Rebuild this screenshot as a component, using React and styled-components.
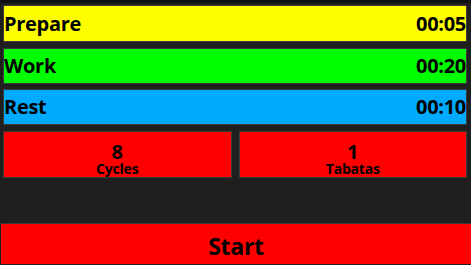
import React from 'react';
import styled, { createGlobalStyle } from 'styled-components';

const GlobalStyle = createGlobalStyle`
    html, body {
        margin: 0;
        padding: 0;
        background: #1f1f1f;
    }
    * {
        box-sizing: border-box;
    }
`;

const phases = [
    { name: 'Prepare', time: '00:05', color: '#ffff00', height: 37, gap: 0 },
    { name: 'Work', time: '00:20', color: '#00ff00', height: 36, gap: 6 },
    { name: 'Rest', time: '00:10', color: '#00aaff', height: 36, gap: 5 },
];

const counters = [
    { value: 8, label: 'Cycles' },
    { value: 1, label: 'Tabatas' },
];

const App = () => {
    return (
        <>
            <GlobalStyle />
            <Screen>
                <TopStrip />
                {phases.map((p) => (
                    <PhaseBar key={p.name} $color={p.color} $height={p.height} $gap={p.gap}>
                        <span>{p.name}</span>
                        <span>{p.time}</span>
                    </PhaseBar>
                ))}
                <Counters>
                    {counters.map((c) => (
                        <Counter key={c.label}>
                            <div className="value">{c.value}</div>
                            <div className="label">{c.label}</div>
                        </Counter>
                    ))}
                </Counters>
                <Spacer />
                <StartButton>Start</StartButton>
            </Screen>
        </>
    );
};

const Screen = styled.div`
    display: flex;
    flex-direction: column;
    width: 471px;
    height: 265px;
    background: #1f1f1f;
    font-family: "Open Sans", "Noto Sans", sans-serif;
    font-weight: 700;
    color: #000;
    overflow: hidden;
`;

const TopStrip = styled.div`
    height: 5px;
    flex-shrink: 0;
    background: linear-gradient(#111 0, #111 3px, #1f1f1f 3px);
`;

const PhaseBar = styled.div`
    display: flex;
    justify-content: space-between;
    align-items: center;
    flex-shrink: 0;
    height: ${(p) => p.$height}px;
    margin: ${(p) => p.$gap}px 4px 0 3px;
    padding: 0;
    background: ${(p) => p.$color};
    border: 1px solid #3a3a3a;
    font-size: 20px;
    letter-spacing: -0.3px;
    line-height: 1;
`;

const Counters = styled.div`
    display: grid;
    grid-template-columns: 1fr 1fr;
    gap: 7px;
    height: 47px;
    flex-shrink: 0;
    margin: 6px 4px 0 3px;
`;

const Counter = styled.div`
    display: flex;
    flex-direction: column;
    align-items: center;
    justify-content: flex-start;
    background: #ff0000;
    border: 1px solid #3a3a3a;
    padding-top: 11px;
    .value {
        font-size: 20px;
        line-height: 18px;
    }
    .label {
        font-size: 14px;
        line-height: 14px;
        letter-spacing: -0.2px;
        margin-top: 1px;
    }
`;

const Spacer = styled.div`
    height: 45px;
    flex-shrink: 0;
`;

const StartButton = styled.div`
    display: flex;
    align-items: center;
    justify-content: center;
    height: 41px;
    flex-shrink: 0;
    margin-left: 1px;
    background: #ff0000;
    border-top: 1px solid #3a3a3a;
    font-size: 23px;
    letter-spacing: -0.3px;
    padding-top: 3px;
`;

export default App;
